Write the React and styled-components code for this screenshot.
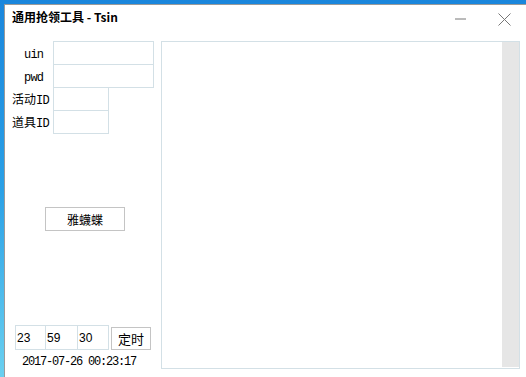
import React from "react";
import styled, { createGlobalStyle } from "styled-components";

const Global = createGlobalStyle`
  html, body { margin: 0; padding: 0; width: 526px; height: 377px; overflow: hidden; }
  body {
    background: linear-gradient(180deg, #1a86dc 0%, #2aa0e6 50%, #6ad0f0 100%);
    font-family: "Noto Sans CJK SC", "Liberation Sans", sans-serif;
  }
`;

const Window = styled.div`
  margin: 4px 0 0 4px;
  width: 522px;
  height: 373px;
  background: #fff;
  border-top: 1px solid #9a9a9a;
  border-left: 1px solid #9a9a9a;
  box-sizing: border-box;
  display: flex;
  flex-direction: column;
`;

const TitleBar = styled.div`
  height: 36px;
  display: flex;
  align-items: flex-start;
  padding: 4px 0 0 7px;
  box-sizing: border-box;
`;

const Title = styled.div`
  font-family: "Noto Sans CJK SC", "Liberation Sans", sans-serif;
  font-weight: bold;
  font-size: 12px;
  line-height: 16px;
  color: #000;
  flex: 1;
`;

const Controls = styled.div`
  display: flex;
  align-items: center;
  gap: 21px;
  margin: 3px 5px 0 0;
`;

const CtrlBtn = styled.div`
  width: ${(p) => p.w}px;
  height: 14px;
  display: flex;
  align-items: center;
  justify-content: center;
`;

const Body = styled.div`
  flex: 1;
  display: flex;
`;

const LeftPanel = styled.div`
  width: 156px;
  display: flex;
  flex-direction: column;
`;

const FieldRow = styled.div`
  display: flex;
  height: 24px;
  align-items: stretch;
  & + & { margin-top: -1px; }
`;

const Label = styled.div`
  width: 48px;
  box-sizing: border-box;
  padding-left: ${(p) => p.indent}px;
  line-height: 24px;
  font-family: "Noto Sans CJK SC", sans-serif;
  font-size: 12px;
  color: #000;
  white-space: nowrap;
`;

const Latin = styled.span`
  font-family: "Liberation Mono", monospace;
  font-size: 12px;
  letter-spacing: -0.8px;
`;

const Input = styled.div`
  width: ${(p) => p.w}px;
  box-sizing: border-box;
  border: 1px solid #d3e0e6;
  background: #fff;
  font-family: "Liberation Sans", sans-serif;
  font-size: 12px;
  display: flex;
  align-items: center;
  padding-left: 1px;
  & + & { margin-left: -1px; }
`;

const Button = styled.div`
  width: ${(p) => p.w}px;
  height: ${(p) => p.h}px;
  box-sizing: border-box;
  border: 1px solid #c4c4c4;
  background: #fff;
  display: flex;
  align-items: center;
  justify-content: center;
  font-family: "Noto Sans CJK SC", sans-serif;
  font-size: ${(p) => p.fs || 12}px;
  color: #000;
`;

const ButtonSlot = styled.div`
  margin: 73px 0 0 40px;
`;

const TimerRow = styled.div`
  display: flex;
  align-items: flex-start;
  margin: 94px 0 0 10px;
`;

const TimeInputs = styled.div`
  display: flex;
  height: 25px;
  margin-right: 2px;
`;

const TimerBtnSlot = styled.div`
  margin-top: 2px;
`;

const DateText = styled.div`
  margin: 5px 0 0 17px;
  font-family: "Liberation Mono", monospace;
  font-size: 12px;
  letter-spacing: -1.2px;
  line-height: 14px;
  color: #000;
`;

const LogBox = styled.div`
  width: 359px;
  height: 328px;
  box-sizing: border-box;
  border: 1px solid #d3e0e6;
  display: flex;
  padding: 0 0 1px 0;
`;

const LogContent = styled.div`
  flex: 1;
`;

const ScrollTrack = styled.div`
  width: 17px;
  background: #e6e6e6;
`;

export default function App() {
  return (
    <>
      <Global />
      <Window>
        <TitleBar>
          <Title>通用抢领工具 - Tsin</Title>
          <Controls>
            <CtrlBtn w={13}>
              <svg width="11" height="2" viewBox="0 0 11 2">
                <line x1="0" y1="1" x2="11" y2="1" stroke="#777" strokeWidth="1" />
              </svg>
            </CtrlBtn>
            <CtrlBtn w={33}>
              <svg width="13" height="13" viewBox="0 0 13 13">
                <path d="M0.5 0.5 L12.5 12.5 M12.5 0.5 L0.5 12.5" stroke="#777" strokeWidth="1" fill="none" />
              </svg>
            </CtrlBtn>
          </Controls>
        </TitleBar>
        <Body>
          <LeftPanel>
            <FieldRow>
              <Label indent={19}><Latin>uin</Latin></Label>
              <Input w={101} />
            </FieldRow>
            <FieldRow>
              <Label indent={19}><Latin>pwd</Latin></Label>
              <Input w={101} />
            </FieldRow>
            <FieldRow>
              <Label indent={7}>活动<Latin>ID</Latin></Label>
              <Input w={56} />
            </FieldRow>
            <FieldRow>
              <Label indent={7}>道具<Latin>ID</Latin></Label>
              <Input w={56} />
            </FieldRow>
            <ButtonSlot>
              <Button w={80} h={24}>雅蠛蝶</Button>
            </ButtonSlot>
            <TimerRow>
              <TimeInputs>
                <Input w={31}>23</Input>
                <Input w={33}>59</Input>
                <Input w={32}>30</Input>
              </TimeInputs>
              <TimerBtnSlot>
                <Button w={40} h={23} fs={13}>定时</Button>
              </TimerBtnSlot>
            </TimerRow>
            <DateText>2017-07-26 00:23:17</DateText>
          </LeftPanel>
          <LogBox>
            <LogContent />
            <ScrollTrack />
          </LogBox>
        </Body>
      </Window>
    </>
  );
}
